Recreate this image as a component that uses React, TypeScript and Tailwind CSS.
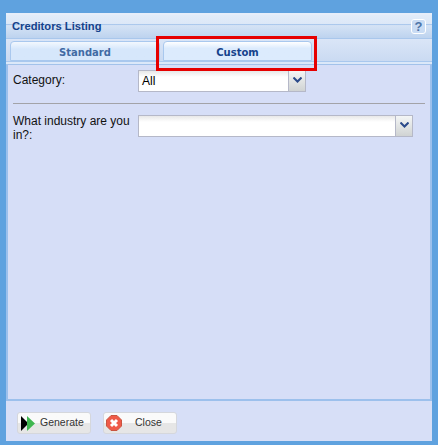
const FONT = "font-['Liberation_Sans',Arial,sans-serif]"

function Combo({ width, value }: { width: string; value?: string }) {
  return (
    <div className={`${width} h-[22px] flex border border-[#b5b8c8] bg-white`}>
      <div className="flex-1 pl-[3px] text-[12px] leading-[21px] text-black bg-gradient-to-b from-[#e8e8e8] to-white to-[30%]">
        {value}
      </div>
      <div className="w-[17px] border-l border-[#b5b8c8] bg-gradient-to-b from-[#f4f6f6] to-[#d0d3d3] flex items-center justify-center pb-[3px]">
        <svg width="9" height="6" viewBox="0 0 9 6">
          <path d="M0.5 0.5 L4.5 4.5 L8.5 0.5" fill="none" stroke="#2b4a8a" strokeWidth="2" />
        </svg>
      </div>
    </div>
  )
}

function Tab({ label, active, width }: { label: string; active?: boolean; width: string }) {
  return (
    <div
      className={`${width} h-[20px] pt-[2px] rounded-t-[4px] border border-[#a9c8ee] flex items-center justify-center font-['DejaVu_Sans',sans-serif] font-bold text-[10px] bg-gradient-to-b ${
        active ? 'from-white to-[#dcebfd] to-[35%] text-[#15428b]' : 'from-[#f3f8fe] to-[#d6e7fb] to-[40%] text-[#416aa3]'
      }`}
    >
      {label}
    </div>
  )
}

export default function App() {
  return (
    <div className={`${FONT} w-[438px] h-[445px] bg-[#5fa2df] pt-[13px] pl-[6px] pr-[6px] pb-[4px]`}>
      <div className="relative h-full flex flex-col bg-[#d6def7]">
        <div className="h-[26px] shrink-0 flex items-center justify-between pl-[6px] pr-[6px] border-t-2 border-t-[#e6eefa] border-b border-b-[#a9c7ec] bg-[linear-gradient(to_bottom,#e2ecf9_0%,#dce8f7_40%,#a9c7ec_41%,#d5e3f5_46%,#bdd3ef_100%)]">
          <span className="text-[11.2px] font-bold text-[#15428b] leading-none pt-[1px]">Creditors Listing</span>
          <div className="w-[15px] h-[15px] rounded-[3px] border border-white bg-[#c9dcf4] flex items-center justify-center text-[13px] font-bold text-[#4d74a8] leading-none">
            ?
          </div>
        </div>

        <div className="h-[26px] shrink-0 flex flex-col bg-gradient-to-b from-[#dae5f7] to-[#c8d9f1] border-b border-[#a3c2ea]">
          <div className="h-[23px] flex items-end gap-[3px] pl-[4px] pr-[1px] border-b border-[#a9c8ee]">
            <Tab label="Standard" width="w-[150px]" />
            <Tab label="Custom" active width="w-[149px]" />
          </div>
          <div className="flex-1 bg-[#dbe8f9]" />
        </div>

        <div className="flex-1 flex flex-col pt-[5px] pl-[5px] pr-[5px] border-l-2 border-r-2 border-b-2 border-[#9cc0ec]">
          <div className="flex">
            <div className="w-[125px] text-[12px] leading-[15px] text-[#111] pt-[3px]">Category:</div>
            <Combo width="w-[168px]" value="All" />
          </div>
          <div className="mt-[11px] h-[1px] bg-[#a3a3a8]" />
          <div className="mt-[11px] flex">
            <div className="w-[125px] text-[12px] leading-[14px] text-[#111] -mt-[1px]">What industry are you in?:</div>
            <Combo width="w-[275px]" />
          </div>
        </div>

        <div className="h-[40px] shrink-0 flex items-start gap-[12px] pl-[11px] pt-[11px] bg-[#d7dff7]">
          <button className="w-[74px] h-[22px] flex items-center rounded-[3px] border border-[#d5d7dc] bg-gradient-to-b from-[#fafafa] from-50% to-[#e6e6e6] to-50% text-[10.5px] text-[#333] pl-[3px]">
            <svg width="18" height="15" viewBox="0 0 18 15" className="shrink-0">
              <path d="M0 0 L7.5 7.5 L0 15 Z" fill="#000" />
              <path d="M6 0 L14 7.5 L6 15 Z" fill="#3fb74f" />
            </svg>
            <span className="ml-[1px]">Generate</span>
          </button>
          <button className="w-[74px] h-[22px] flex items-center rounded-[3px] border border-[#d5d7dc] bg-gradient-to-b from-[#fafafa] from-50% to-[#e6e6e6] to-50% text-[10.5px] text-[#333] pl-[2px]">
            <svg width="16" height="16" viewBox="0 0 16 16" className="shrink-0">
              <path d="M5 0.5 H11 L15.5 5 V11 L11 15.5 H5 L0.5 11 V5 Z" fill="#ef5a48" stroke="#c9543f" />
              <path d="M5 5 L11 11 M11 5 L5 11" stroke="#fff" strokeWidth="3" />
            </svg>
            <span className="ml-[13px]">Close</span>
          </button>
        </div>

        {/* red annotation drawn over the Custom tab */}
        <div className="absolute left-[150px] top-[23px] w-[161px] h-[35px] border-[3px] border-[#e60000]" />
      </div>
    </div>
  )
}
